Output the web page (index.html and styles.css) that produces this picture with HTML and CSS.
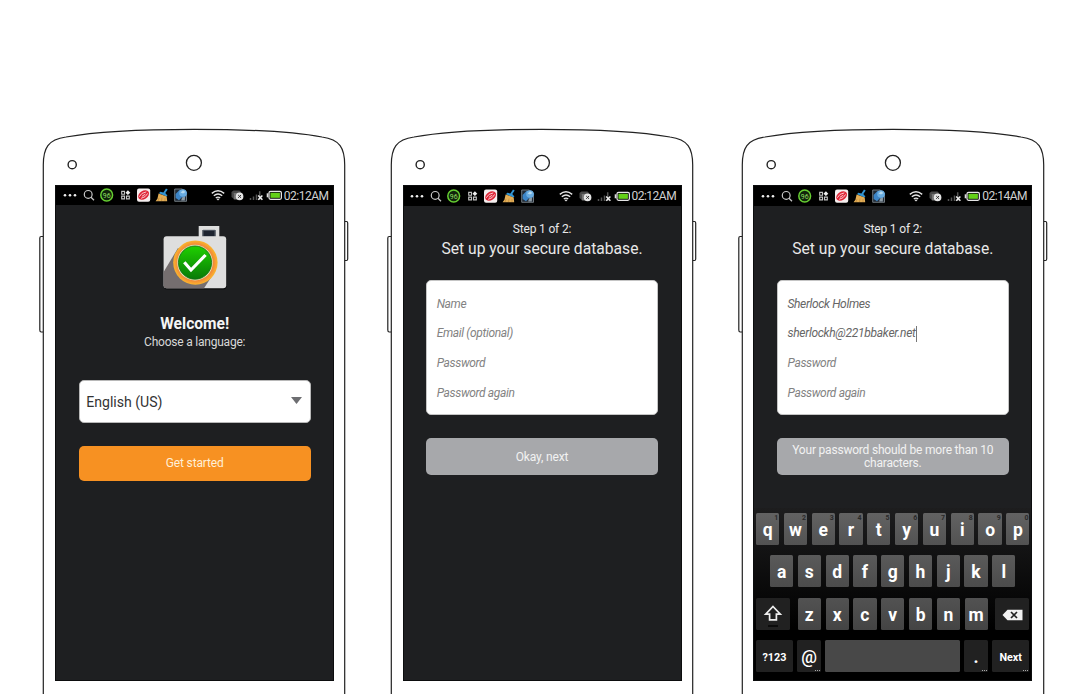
FILE: index.html
```
<!DOCTYPE html>
<html lang="en">
<head>
<meta charset="utf-8">
<title>Setup screens</title>
<link rel="stylesheet" href="styles.css">
</head>
<body>
<svg class="defs" width="0" height="0" aria-hidden="true">
  <defs>
    <linearGradient id="green" x1="0" y1="0" x2="0" y2="1"><stop offset="0" stop-color="#1fd000"/><stop offset="1" stop-color="#087a08"/></linearGradient>
    <radialGradient id="ring"><stop offset=".76" stop-color="#ef7d3c"/><stop offset="1" stop-color="#fbb62c"/></radialGradient>
    <symbol id="frame" viewBox="0 0 310 566">
      <g fill="#fff" stroke="#222" stroke-width="1.2">
        <path d="M4.3 108.5H2.2Q.8 108.5.8 110V202Q.8 204 2.2 204H4.3M305.7 93.5H307.5Q308.7 93.5 308.7 95V131Q308.7 132.5 307.5 132.5H305.7"/>
        <path d="M4.3 568V37C4.3 20 9 11.5 27 9C55 3.8 105 1.3 155 1.3S255 3.8 283 9C301 11.5 305.7 20 305.7 37V568"/>
        <circle cx="33.2" cy="36.7" r="4.1" stroke-width="1.4"/>
        <circle cx="154.9" cy="34.8" r="7.5" stroke-width="1.3"/>
      </g>
    </symbol>
    <symbol id="notices" viewBox="0 0 130 20">
      <g fill="#eee"><circle cx="2" cy="10.3" r="1.3"/><circle cx="7" cy="10.3" r="1.3"/><circle cx="12" cy="10.3" r="1.3"/></g>
      <g fill="none" stroke="#c8c8c8" stroke-width="1.2"><circle cx="25.2" cy="9.4" r="3.9"/><path d="M28 12.3L31 15.2"/></g>
      <circle cx="43.7" cy="10" r="5.9" fill="#10240b" stroke="#66cf32" stroke-width="1.5"/>
      <text x="43.7" y="12.6" text-anchor="middle" class="badge-text">96</text>
      <g fill="none" stroke="#c4c4c4" stroke-width="1.1"><path d="M58.7 6.4H61.5V9.2H58.7ZM58.7 11.1H61.5V13.9H58.7ZM63.5 11.1H66.3V13.9H63.5Z"/></g>
      <path d="M64.9 5.2L67.3 7.7L64.9 10.1L62.5 7.7Z" fill="#eee"/>
      <rect x="74" y="3.5" width="13.2" height="13.2" rx="2" fill="#f5eeee"/>
      <g transform="rotate(-32 80.6 10)"><ellipse cx="80.6" cy="10" rx="5.9" ry="4.1" fill="#df2435"/><path d="M76 9.2Q80 6.6 84.5 8.8M76.7 11.5Q81 13.2 85 10.8M78.5 10.2H82.5" fill="none" stroke="#fbdde0" stroke-width=".8"/></g>
      <path d="M103 3.4L104.7 4.4L102.3 8L104.4 10.5L103.5 11.4L96 8.3L97.2 6.8L100.4 7.4Z" fill="#3294d2"/>
      <path d="M95.6 8.5L103.7 11.4L104.2 16.3H92.6L94.4 13.8Z" fill="#e2ad55"/><path d="M96 13L95 16M99 12.5L98.5 16M102 13V16" stroke="#ac7934" stroke-width=".5"/>
      <path d="M111.7 4H119L123.5 7V16.3H111.7Z" fill="#222c37" stroke="#89939b" stroke-width=".8"/>
      <path d="M112.6 9L116.5 5L121 5L124.2 8L122 12.6L118.6 12.4L116 15.2L112.7 13Z" fill="#3c85c7"/><circle cx="120" cy="8" r="3.8" fill="#69ace0"/><path d="M117.6 7.6L120 5.2L122.6 7L120 8.6Z" fill="#b5d9ef"/><path d="M119 12.6L122 11.6L121.8 15.4L118.2 15.4Z" fill="#8e9ca6"/>
    </symbol>
    <symbol id="signals" viewBox="0 0 72 20">
      <g fill="none" stroke="#e5e5e5" stroke-width="1.4"><path d="M.8 8.4Q7 3.2 13.2 8.4M2.8 10.8Q7 7.3 11.2 10.8M4.8 13Q7 11.2 9.2 13"/></g><path d="M5.5 13.9Q7 12.9 8.5 13.9L7 15.5Z" fill="#e5e5e5"/>
      <path d="M20.5 7L22.5 5.4H28.5L30 7V9H22.5V13.5L20.5 12Z" fill="#4a4a4a"/><rect x="22.5" y="8" width="7" height="6.5" rx="1" fill="#777"/>
      <circle cx="28.6" cy="11.4" r="3.8" fill="#e5e5e5"/><path d="M27.2 10L30 12.8M30 10L27.2 12.8" stroke="#333" stroke-width="1"/>
      <path d="M39.5 13V15M42.5 11.5V15M45.5 9.5V15M48.7 6.2V15" stroke="#555" stroke-width="1.5"/>
      <path d="M47.2 10.4L51.4 14.8M51.4 10.4L47.2 14.8" stroke="#eee" stroke-width="1.5"/>
      <rect x="58" y="6.3" width="12.4" height="8" rx="1.5" fill="#111" stroke="#e5e5e5" stroke-width="1.2"/><path d="M56.5 8.3V12.3" stroke="#ddd" stroke-width="1.6"/><rect x="59.5" y="7.8" width="9.4" height="5" fill="#63d018"/>
    </symbol>
  </defs>
</svg>
<main class="stage">
  <section class="phone">
    <svg class="frame"><use href="#frame"/></svg>
    <div class="screen">
      <header class="status first"><svg class="notices"><use href="#notices"/></svg><svg class="signals"><use href="#signals"/></svg><span class="clock">02:12AM</span></header>
      <div class="welcome">
        <svg class="logo" viewBox="0 0 66 66">
          <path d="M38.6 12V3H55.4V12" fill="#1e2430" stroke="#dedede" stroke-width="3.8"/><path d="M41 12V5.3H53V12Z" fill="none" stroke="#58606b" stroke-width="1"/>
          <rect x="2" y="12" width="62.5" height="52.5" rx="3" fill="#0b0c0d"/>
          <rect x="1.6" y="11.2" width="62.6" height="52" rx="3" fill="#dedede"/>
          <path d="M1.6 47L16 23L50 51L42 63.2H4.6Q1.6 63.2 1.6 60Z" fill="#756e6f"/>
          <circle cx="33.4" cy="37.6" r="22.2" fill="url(#ring)"/><circle cx="33" cy="37.6" r="17.8" fill="#dfe7b4"/><circle cx="33" cy="37.6" r="16.6" fill="url(#green)" stroke="#176b18" stroke-width=".8"/>
          <path d="M22.3 37.3L29 45L43.6 30" fill="none" stroke="#fff" stroke-width="3.2"/>
        </svg>
        <h1>Welcome!</h1>
        <p>Choose a language:</p>
        <div class="select"><span>English (US)</span><svg width="11" height="7" viewBox="0 0 11 7"><path d="M0 0H11L5.5 7Z" fill="#6d6e71"/></svg></div>
        <div class="button start">Get started</div>
      </div>
    </div>
  </section>

  <section class="phone">
    <svg class="frame"><use href="#frame"/></svg>
    <div class="screen">
      <header class="status"><svg class="notices"><use href="#notices"/></svg><svg class="signals"><use href="#signals"/></svg><span class="clock">02:12AM</span></header>
      <div class="setup">
        <p class="step">Step 1 of 2:</p>
        <h2>Set up your secure database.</h2>
        <div class="fields"><span>Name</span><span>Email (optional)</span><span>Password</span><span>Password again</span></div>
        <div class="button next">Okay, next</div>
      </div>
    </div>
  </section>

  <section class="phone">
    <svg class="frame"><use href="#frame"/></svg>
    <div class="screen">
      <header class="status"><svg class="notices"><use href="#notices"/></svg><svg class="signals"><use href="#signals"/></svg><span class="clock">02:14AM</span></header>
      <div class="setup">
        <p class="step">Step 1 of 2:</p>
        <h2>Set up your secure database.</h2>
        <div class="fields"><span class="filled">Sherlock Holmes</span><span class="filled email">sherlockh@221bbaker.net<i class="caret"></i></span><span>Password</span><span>Password again</span></div>
        <div class="button next warn">Your password should be more than 10<br>characters.</div>
      </div>
      <div class="keyboard">
        <div class="row"><b class="key">q<i>1</i></b><b class="key">w<i>2</i></b><b class="key">e<i>3</i></b><b class="key">r<i>4</i></b><b class="key">t<i>5</i></b><b class="key">y<i>6</i></b><b class="key">u<i>7</i></b><b class="key">i<i>8</i></b><b class="key">o<i>9</i></b><b class="key">p<i>0</i></b></div>
        <div class="row inset"><b class="key">a</b><b class="key">s</b><b class="key">d</b><b class="key">f</b><b class="key">g</b><b class="key">h</b><b class="key">j</b><b class="key">k</b><b class="key">l</b></div>
        <div class="row third"><b class="key dark shift"><svg width="20" height="24" viewBox="0 0 20 24"><path d="M10 3.5L17.3 11.2H13.4V16.8H6.6V11.2H2.7Z" fill="none" stroke="#eee" stroke-width="1.7"/><path d="M5 23H15" stroke="#000" stroke-width="1.3"/></svg></b><b class="key">z</b><b class="key">x</b><b class="key">c</b><b class="key">v</b><b class="key">b</b><b class="key">n</b><b class="key">m</b><b class="key dark delete"><svg width="21" height="12" viewBox="0 0 21 12"><path d="M.5 6L5.5.7H20.5V11.3H5.5Z" fill="#f2f2f2"/><path d="M9 3L15 9M15 3L9 9" stroke="#222" stroke-width="1.7"/></svg></b></div>
        <div class="row"><b class="key dark mode">?123</b><b class="key dark at more">@</b><b class="key space"></b><b class="key dark dot more">.</b><b class="key dark go more">Next</b></div>
      </div>
    </div>
  </section>
</main>
</body>
</html>
```
FILE: styles.css
```
* { box-sizing: border-box; }
body { margin: 0; background: #fff; font-family: Roboto, "Liberation Sans", sans-serif; overflow: hidden; }
h1, h2, p { margin: 0; font-weight: 400; }
svg { display: block; flex: none; }
.defs { position: absolute; }
.stage { display: flex; height: 694px; padding: 128px 0 0 39px; overflow: hidden; }
.phone { position: relative; flex: none; width: 310px; height: 566px; padding: 56.7px 0 0 15.5px; margin-right: 38.2px; }
.phone:nth-child(2) { margin-right: 40.8px; }
.phone:last-child { margin-right: 0; }
.frame { position: absolute; left: 0; top: 0; width: 310px; height: 566px; }
.screen { position: relative; display: flex; flex-direction: column; width: 279px; height: 496px; background: #1e1f21; border: 1px solid #0c0d0e; color: #e8e8e8; }
.status { display: flex; flex: none; height: 20px; background: #000; padding-left: 6.7px; }
.status.first { height: 19.5px; margin-bottom: .5px; padding-left: 7.2px; }
.notices { width: 130px; height: 20px; margin-top: .3px; }
.signals { width: 72px; height: 20px; margin: .3px 0 0 18.3px; }
.first svg { margin-top: -.6px; }
.clock { font-size: 12px; letter-spacing: -.5px; line-height: 21px; margin-left: .8px; color: #d0d0d0; white-space: nowrap; }
.first .clock { line-height: 20px; }
.badge-text { font: 7px Roboto, sans-serif; fill: #91df61; }
.welcome { padding: 19px 21.8px 0 23.2px; text-align: center; }
.logo { width: 66px; height: 66px; margin: 0 auto; }
.welcome h1 { margin-top: 23px; font-size: 15.6px; font-weight: 700; line-height: 20px; color: #f5f5f5; }
.welcome p { font-size: 12px; letter-spacing: -.22px; line-height: 16px; color: #d8d8d8; }
.select { display: flex; justify-content: space-between; align-items: center; height: 43px; margin-top: 30px; padding: 1px 8px 0 6.5px; background: #fff; border: 1px solid #b8b8b8; border-radius: 5px; color: #333; font-size: 14.1px; }
.select svg { margin: -2px 0 0; }
.button { display: flex; justify-content: center; align-items: center; border-radius: 5px; font-size: 12px; letter-spacing: -.15px; }
.start { height: 35px; margin-top: 23px; background: #f79122; color: #ffefd7; }
.setup { padding: 15.4px 22.7px 0 22.3px; text-align: center; }
.step { font-size: 12px; letter-spacing: -.17px; line-height: 17px; }
.setup h2 { font-size: 15.65px; line-height: 21px; white-space: nowrap; }
.fields { display: flex; flex-direction: column; height: 135px; margin-top: 21.2px; padding: 8.3px 9.7px 0; background: #fff; border: 1px solid #c5c5c5; border-radius: 5px; text-align: left; color: #828282; font-size: 12px; letter-spacing: -.35px; font-style: italic; line-height: 29.8px; }
.filled { color: #666; }
.email { display: flex; align-items: center; letter-spacing: -.28px; }
.caret { width: 1px; height: 16px; background: #777; }
.next { height: 37px; margin-top: 23px; background: #a7a8ab; color: #f2f2f2; }
.warn { letter-spacing: -.2px; line-height: 13.5px; padding-top: 1px; }
.keyboard { display: flex; flex: none; flex-direction: column; gap: 10.3px; height: 172px; margin-top: auto; padding: 5px 2px 0 1.5px; background: linear-gradient(#1d1d1e, #000 70%); }
.row { display: flex; justify-content: space-between; height: 32.2px; }
.inset { padding: 0 14px; }
.key { position: relative; display: flex; flex: none; justify-content: center; align-items: center; width: 23.2px; height: 32.2px; padding-top: 2px; border-radius: 1.5px; background: linear-gradient(#626262, #525252); color: #fff; font-size: 17.5px; font-weight: 700; }
.inset .key { background: linear-gradient(#5a5a5a, #4c4c4c); }
.third .key { background: linear-gradient(#525252, #444); }
.key i { position: absolute; top: 1px; right: 1px; font-size: 7px; font-style: normal; line-height: 9px; color: #292929; }
.key.dark, .third .dark { background: #212121; }
.more::after { content: ""; position: absolute; right: 1px; bottom: 1.5px; width: 5px; border-bottom: 1px dotted #aaa; }
.shift, .delete { width: 34.3px; }
.shift { margin-right: 2.8px; }
.delete { margin-left: 2.8px; }
.key.mode { width: 37px; font-size: 10.8px; }
.key.at { font-size: 17.5px; font-weight: 500; }
.key.space { width: 135px; background: #484848; }
.key.go { width: 37.5px; font-size: 10.8px; }
```
